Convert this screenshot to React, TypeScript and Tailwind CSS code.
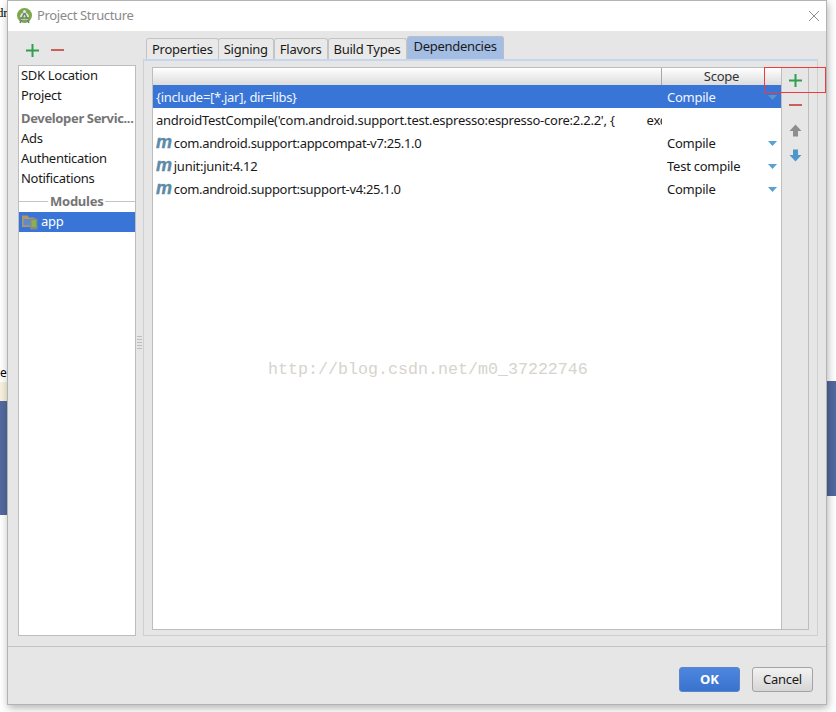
import React from "react";

const font = { fontFamily: '"Noto Sans", sans-serif' };

function Plus() {
  return (
    <svg width="13" height="13" viewBox="0 0 13 13">
      <path d="M5.5 0h2v5.5H13v2H7.5V13h-2V7.5H0v-2h5.5z" fill="#2f9e4f" />
    </svg>
  );
}

function Minus() {
  return (
    <svg width="13" height="13" viewBox="0 0 13 13">
      <rect x="0" y="5" width="13" height="2" fill="#c9605a" />
    </svg>
  );
}

function Arrow({ up, color }: { up?: boolean; color: string }) {
  return (
    <svg width="13" height="13" viewBox="0 0 13 13" className={up ? "" : "rotate-180"}>
      <path d="M6.5 0.5L12.5 7H9v5.5H4V7H0.5z" fill={color} />
    </svg>
  );
}

function Caret({ muted }: { muted?: boolean }) {
  return (
    <svg width="9" height="5" viewBox="0 0 9 5">
      <path d="M0 0h9L4.5 5z" fill={muted ? "#5b94c8" : "#5aa0d2"} />
    </svg>
  );
}

function MIcon() {
  return (
    <span className="shrink-0 text-[18px] leading-[20px] font-bold italic text-[#5c8ba8] font-['Liberation_Sans',sans-serif] -mt-[4px] [-webkit-text-stroke:0.4px_#5c8ba8]">
      m
    </span>
  );
}

function AppIcon() {
  return (
    <svg width="17" height="15" viewBox="0 0 17 15" className="shrink-0">
      <path d="M0 0.5h5.5l1.5 2h5.5V12H0z" fill="#b8955c" />
      <rect x="1.5" y="4" width="9.5" height="6.5" fill="#5f8ad0" />
      <rect x="8" y="3.5" width="7.5" height="11" rx="1" fill="#7f8c88" />
      <rect x="9.5" y="5" width="4.5" height="7" fill="#8db04e" />
    </svg>
  );
}

function AndroidLogo() {
  return (
    <svg width="15" height="16" viewBox="0 0 15 16" className="shrink-0">
      <circle cx="7.5" cy="7.5" r="7.5" fill="#7da848" />
      <path d="M3 9a4.5 4.5 0 0 1 9 0z" fill="#dfe9cf" />
      <path d="M7.5 4.5L3 15M7.5 4.5L12 15" stroke="#6b7b86" strokeWidth="1.5" fill="none" />
      <path d="M4 11.5h7" stroke="#b9c4ca" strokeWidth="1" />
      <circle cx="7.5" cy="3.5" r="1.5" fill="#e3e8ea" />
    </svg>
  );
}

function Tab({ label, active, first }: { label: string; active?: boolean; first?: boolean }) {
  return (
    <div
      className={
        active
          ? "h-[23px] px-[6px] flex items-center rounded-t-[3px] border border-b-0 border-[#b5bfcc] bg-[#a4bde3] text-[#1a1a1a] tracking-[-0.3px]"
          : `h-[21px] px-[5px] flex items-center rounded-t-[3px] border border-b-0 border-[#c4c4c4] bg-[#e9e9e9] text-[#1a1a1a] ${first ? "-mr-[1px]" : ""}`
      }
    >
      <span className={active ? "-mt-[2px]" : "mt-[1px]"}>{label}</span>
    </div>
  );
}

function Row({
  children,
  scope,
  selected,
}: {
  children: React.ReactNode;
  scope?: string;
  selected?: boolean;
}) {
  return (
    <div className={`flex h-[23px] items-center pt-[2px] ${selected ? "bg-[#3975d6] text-[#f2f6fd]" : "text-[#1a1a1a]"}`}>
      <div className="w-[509px] shrink-0 overflow-hidden whitespace-nowrap pl-[3px] flex items-center gap-[3px]">{children}</div>
      <div className="flex-1 pl-[5px] pr-[4px] flex items-center justify-between">
        <span>{scope}</span>
        {scope && <Caret muted={selected} />}
      </div>
    </div>
  );
}

function SideItem({ label }: { label: string }) {
  return <div className="h-[20px] pl-[2px] flex items-center text-[#1a1a1a] tracking-[-0.3px]">{label}</div>;
}

export default function App() {
  return (
    <div className="relative w-[836px] h-[712px] overflow-hidden bg-white text-[13px] tracking-[-0.25px]" style={font}>
      <div className="absolute left-[-3px] top-[3px] text-[13px] text-black font-['Liberation_Serif',serif]">dr</div>
      <div className="absolute left-0 top-[364px] text-[12px] text-black">e</div>
      <div className="absolute left-0 top-[382px] w-[8px] h-[19px] bg-[#f7f0dc]" />
      <div className="absolute left-0 top-[401px] w-[8px] h-[114px] bg-[#52699f]" />
      <div className="absolute right-0 top-[381px] w-[10px] h-[115px] bg-[#52699f]" />

      <div className="relative ml-[7px] w-[820px] h-[705px] border border-[#b3b3b3] bg-[#e6e6e6] shadow-[1px_3px_8px_rgba(0,0,0,0.3)] flex flex-col">
        <div className="h-[30px] bg-white flex items-center pl-[9px] gap-[5px] text-[#8a8a8a] shrink-0">
          <AndroidLogo />
          <span className="text-[13px] tracking-[-0.35px]">Project Structure</span>
          <svg width="12" height="12" viewBox="0 0 12 12" className="ml-auto mr-[6px]">
            <path d="M1 1l10 10M11 1L1 11" stroke="#8c8c8c" strokeWidth="1" />
          </svg>
        </div>

        <div className="flex-1 flex pl-[10px] pt-[7px] min-h-0">
          <div className="w-[118px] shrink-0 flex flex-col">
            <div className="h-[27px] flex items-center pl-[8px] pb-[2px] gap-[12px] shrink-0">
              <Plus />
              <Minus />
            </div>
            <div className="h-[571px] border border-[#bdbdbd] bg-white">
              <SideItem label="SDK Location" />
              <SideItem label="Project" />
              <div className="h-[23px] pl-[2px] pt-[2px] flex items-center font-bold text-[#757575] whitespace-nowrap tracking-[-0.35px]">Developer Servic...</div>
              <SideItem label="Ads" />
              <SideItem label="Authentication" />
              <SideItem label="Notifications" />
              <div className="h-[23px] flex items-center gap-[2px] font-bold text-[#757575]">
                <div className="h-px w-[29px] bg-[#c4c4c4] mt-[1px]" />
                <span className="mt-[2px]">Modules</span>
                <div className="h-px flex-1 bg-[#c4c4c4] mt-[1px]" />
              </div>
              <div className="h-[20px] bg-[#3975d6] text-white flex items-center pl-[3px] gap-[2px]">
                <AppIcon />
                <span>app</span>
              </div>
            </div>
          </div>

          <div className="w-[7px] shrink-0 relative">
            <div className="absolute left-[1px] top-[297px] w-[5px] h-[15px] bg-[radial-gradient(#bdbdbd_0.7px,transparent_0.8px)] bg-[length:2px_3px]" />
          </div>

          <div className="w-[675px] flex flex-col shrink-0">
            <div className="h-[21px] flex items-end shrink-0 pl-[3px]">
              <Tab label="Properties" first />
              <Tab label="Signing" />
              <Tab label="Flavors" />
              <Tab label="Build Types" />
              <Tab label="Dependencies" active />
            </div>
            <div className="h-[577px] border border-t-2 border-[#cfcfcf] border-t-[#c6d6ee] px-[8px] pt-[6px] pb-[5px]">
              <div className="h-full border border-[#bdbdbd] bg-white flex">
                <div className="flex-1 flex flex-col min-w-0">
                  <div className="h-[17px] flex bg-gradient-to-b from-white to-[#dcdcdc] shrink-0">
                    <div className="w-[509px] border-r border-[#a8a8a8]" />
                    <div className="flex-1 text-center text-[#333] leading-[17px]">Scope</div>
                  </div>
                  <Row selected scope="Compile">
                    <span className="tracking-[-0.3px]">{"{include=[*.jar], dir=libs}"}</span>
                  </Row>
                  <Row>
                    <span>androidTestCompile('com.android.support.test.espresso:espresso-core:2.2.2', {"{"}</span>
                    <span className="ml-[29px]">exclude</span>
                  </Row>
                  <Row scope="Compile"><MIcon /><span className="-ml-[1px] tracking-[-0.33px]">com.android.support:appcompat-v7:25.1.0</span></Row>
                  <Row scope="Test compile"><MIcon /><span className="-ml-[1px]">junit:junit:4.12</span></Row>
                  <Row scope="Compile"><MIcon /><span className="-ml-[1px] tracking-[-0.33px]">com.android.support:support-v4:25.1.0</span></Row>
                </div>
                <div className="w-[27px] shrink-0 border-l border-[#bdbdbd] bg-[#e6e6e6] flex flex-col items-center pt-[6px] gap-[12px]">
                  <Plus />
                  <Minus />
                  <Arrow up color="#8e8e8e" />
                  <Arrow color="#4f96cc" />
                </div>
              </div>
            </div>
          </div>
        </div>

        <div className="h-[58px] shrink-0 border-t border-[#c4c4c4] flex items-start justify-end pt-[20px] pr-[13px] gap-[12px]">
          <button className="w-[61px] h-[25px] rounded-[3px] border border-[#5a86c8] bg-gradient-to-b from-[#4d86de] to-[#3a73cf] text-white font-bold tracking-[0px]">OK</button>
          <button className="w-[61px] h-[25px] rounded-[3px] border border-[#a3a3a3] bg-gradient-to-b from-[#f2f2f2] to-[#d6d6d6] text-[#1a1a1a]">Cancel</button>
        </div>
      </div>

      <div className="absolute left-[268px] top-[357px] text-[16.67px] tracking-normal text-[#d6d4cc] font-['Liberation_Mono',monospace] pointer-events-none">http://blog.csdn.net/m0_37222746</div>
      <div className="absolute left-[764px] top-[67px] w-[62px] h-[26px] border border-[#ef3b3b] pointer-events-none" />
    </div>
  );
}
